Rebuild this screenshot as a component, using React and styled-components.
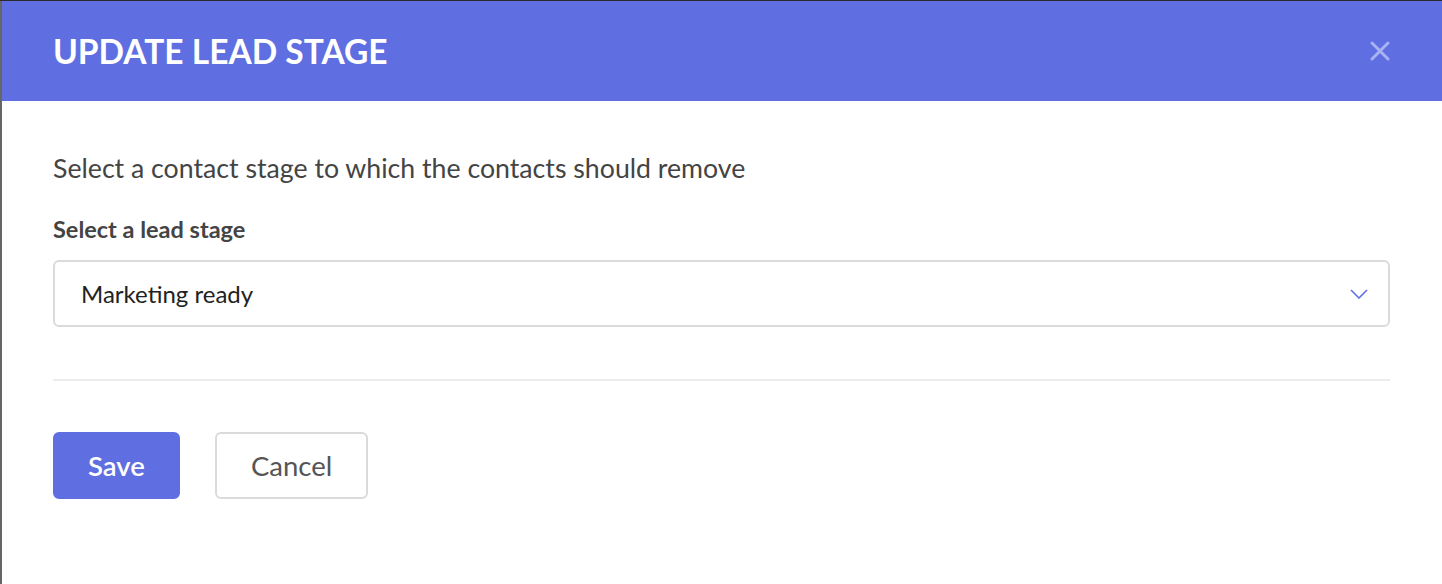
import React, {useState} from "react";
import styled, {createGlobalStyle} from "styled-components";

const GlobalStyle = createGlobalStyle`
  html, body {
    margin: 0;
    padding: 0;
    height: 100%;
  }
  body {
    font-family: Lato, "Open Sans", sans-serif;
    background: #666;
  }
`;

const STAGES = ["Marketing ready", "Sales ready", "Customer", "Lost"];

const UpdateLeadStage = () => {
  const [stage] = useState(STAGES[0]);
  return (
    <Backdrop>
      <GlobalStyle />
      <Modal>
        <Header>
          <Title>UPDATE LEAD STAGE</Title>
          <Close aria-label="close">
            <svg width="22" height="22" viewBox="0 0 22 22">
              <path
                d="M3 3L19 19M19 3L3 19"
                stroke="currentColor"
                strokeWidth="3"
                strokeLinecap="round"
              />
            </svg>
          </Close>
        </Header>
        <Body>
          <Intro>Select a contact stage to which the contacts should remove</Intro>
          <Label>Select a lead stage</Label>
          <Select>
            <span>{stage}</span>
            <svg width="18" height="10" viewBox="0 0 18 10">
              <path
                d="M1 1L9 9L17 1"
                fill="none"
                stroke="#5f6fe1"
                strokeWidth="1.6"
              />
            </svg>
          </Select>
          <Divider />
          <Actions>
            <Button primary>Save</Button>
            <Button>Cancel</Button>
          </Actions>
        </Body>
      </Modal>
    </Backdrop>
  );
};

const Backdrop = styled.div`
  min-height: 100vh;
  box-sizing: border-box;
  border-top: 1px solid #2b2b2b;
  padding-left: 2px;
  display: flex;
`;
const Modal = styled.div`
  flex: 1;
  background: #fff;
`;
const Header = styled.div`
  height: 100px;
  background: #5f6fe1;
  display: flex;
  align-items: center;
  justify-content: space-between;
  padding: 0 51px 0 51px;
`;
const Title = styled.h1`
  margin: 0;
  color: #fff;
  font-size: 33.5px;
  font-weight: 700;
`;
const Close = styled.span`
  color: #a9b2f4;
  display: flex;
  cursor: pointer;
`;
const Body = styled.div`
  padding: 50px 52px 0 51px;
`;
const Intro = styled.p`
  margin: 0;
  font-size: 26.7px;
  color: #444;
  line-height: 34px;
`;
const Label = styled.div`
  margin-top: 29px;
  font-size: 23.5px;
  font-weight: 700;
  color: #444;
  line-height: 30px;
`;
const Select = styled.div`
  margin-top: 16px;
  height: 67px;
  box-sizing: border-box;
  border: 2px solid #dadada;
  border-radius: 6px;
  display: flex;
  align-items: center;
  justify-content: space-between;
  padding: 0 20px 0 26px;
  font-size: 24px;
  color: #222;
`;
const Divider = styled.hr`
  margin: 52px 0 0;
  border: 0;
  border-top: 2px solid #ececec;
`;
const Actions = styled.div`
  display: flex;
  gap: 35px;
  margin-top: 51px;
`;
const Button = styled.button`
  height: 67px;
  box-sizing: border-box;
  padding: 0 ${(p) => (p.primary ? "33px" : "34px")};
  border-radius: 6px;
  font-family: Lato, sans-serif;
  font-size: 27.5px;
  cursor: pointer;
  background: ${(p) => (p.primary ? "#5f6fe1" : "#fff")};
  color: ${(p) => (p.primary ? "#fff" : "#555")};
  border: 2px solid ${(p) => (p.primary ? "#5f6fe1" : "#dadada")};
  font-weight: ${(p) => (p.primary ? 600 : 400)};
`;

export default UpdateLeadStage;
